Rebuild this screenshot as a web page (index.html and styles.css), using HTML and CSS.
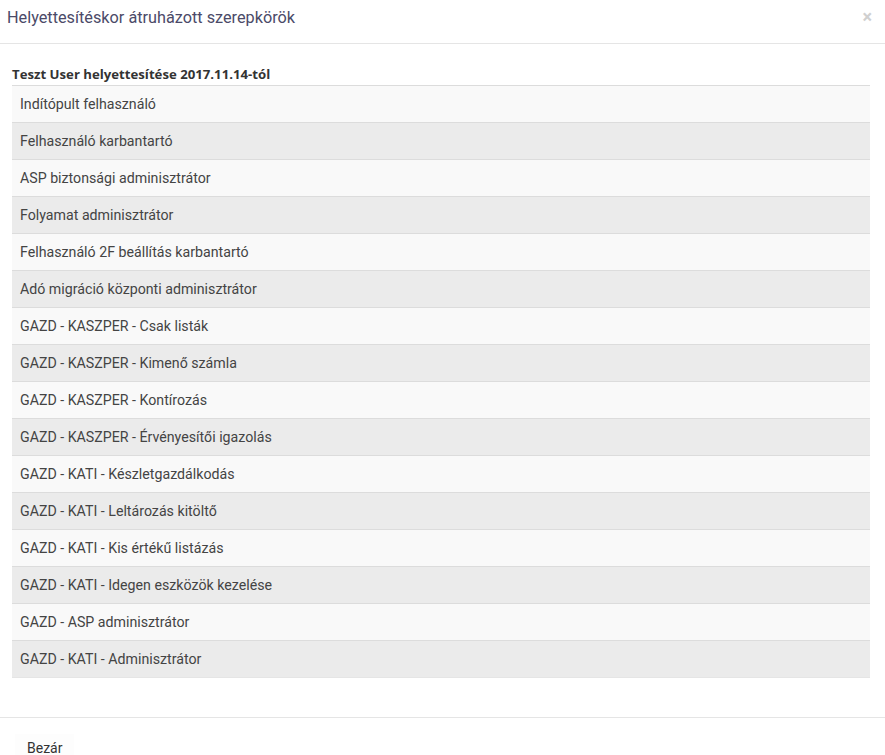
FILE: index.html
```html
<!DOCTYPE html>
<html lang="hu">
<head>
<meta charset="utf-8">
<link rel="stylesheet" href="styles.css">
</head>
<body>
<div class="modal">
  <div class="modal-header">
    <h4 class="modal-title">Helyettesítéskor átruházott szerepkörök</h4>
    <span class="close">×</span>
  </div>
  <div class="modal-body">
    <div class="caption">Teszt User helyettesítése 2017.11.14-tól</div>
    <div class="list">
      <div class="row">Indítópult felhasználó</div>
      <div class="row">Felhasználó karbantartó</div>
      <div class="row">ASP biztonsági adminisztrátor</div>
      <div class="row">Folyamat adminisztrátor</div>
      <div class="row">Felhasználó 2F beállítás karbantartó</div>
      <div class="row">Adó migráció központi adminisztrátor</div>
      <div class="row">GAZD - KASZPER - Csak listák</div>
      <div class="row">GAZD - KASZPER - Kimenő számla</div>
      <div class="row">GAZD - KASZPER - Kontírozás</div>
      <div class="row">GAZD - KASZPER - Érvényesítői igazolás</div>
      <div class="row">GAZD - KATI - Készletgazdálkodás</div>
      <div class="row">GAZD - KATI - Leltározás kitöltő</div>
      <div class="row">GAZD - KATI - Kis értékű listázás</div>
      <div class="row">GAZD - KATI - Idegen eszközök kezelése</div>
      <div class="row">GAZD - ASP adminisztrátor</div>
      <div class="row">GAZD - KATI - Adminisztrátor</div>
    </div>
  </div>
  <div class="modal-footer">
    <button class="btn">Bezár</button>
  </div>
</div>
</body>
</html>
```
FILE: styles.css
```css
html, body {
  margin: 0;
  padding: 0;
  background: #fff;
}
body {
  font-family: Roboto, "Liberation Sans", sans-serif;
  color: #333;
}
.modal {
  width: 885px;
  height: 755px;
  overflow: hidden;
}
.modal-header {
  height: 44px;
  border-bottom: 1px solid #e5e5e5;
  display: flex;
  align-items: center;
  justify-content: space-between;
  padding: 0 13px 0 7px;
  box-sizing: border-box;
}
.modal-title {
  margin: 0;
  font-size: 16.25px;
  font-weight: 400;
  color: #4b4a68;
  position: relative;
  top: -4px;
}
.close {
  font-size: 18px;
  color: #d0d0d0;
  font-weight: 700;
  position: relative;
  top: -5px;
}
.modal-body {
  padding: 20px 15px 39px 12px;
}
.caption {
  font-family: "Open Sans", sans-serif;
  font-weight: 700;
  font-size: 13.2px;
  color: #333;
  line-height: 21px;
}
.list {
  border-bottom: 1px solid #e5e5e5;
}
.row {
  height: 37px;
  box-sizing: border-box;
  border-top: 1px solid #dcdcdc;
  padding: 0 8px;
  display: flex;
  align-items: center;
  font-size: 14.2px;
  color: #444;
  background: #f9f9f9;
}
.row:nth-child(even) {
  background: #ebebeb;
}
.modal-footer {
  border-top: 1px solid #e5e5e5;
  padding: 16px 15px;
}
.btn {
  font-family: Roboto, "Liberation Sans", sans-serif;
  font-size: 14px;
  color: #333;
  background: #fdfdfd;
  border: none;
  padding: 6px 12px;
  margin: 0;
}
```
